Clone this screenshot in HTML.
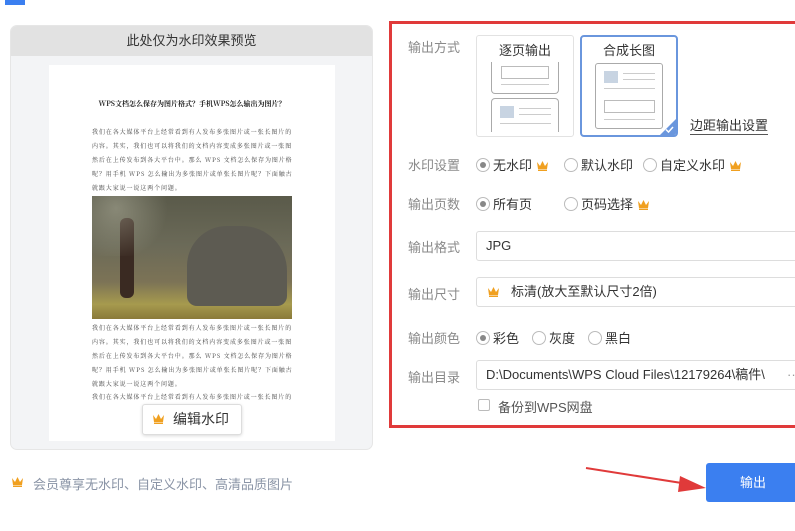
<!DOCTYPE html>
<html><head><meta charset="utf-8"><style>
*{margin:0;padding:0;box-sizing:border-box}
body{width:795px;height:531px;overflow:hidden;background:#fff;font-family:"Liberation Sans","Noto Sans CJK SC",sans-serif;position:relative;color:#333}
.a{position:absolute}
.lbl{position:absolute;left:408px;font-size:13px;color:#8a8a8a}
.txt{position:absolute;font-size:13px;color:#333;white-space:nowrap}
.radio{display:inline-block;width:14px;height:14px;border:1px solid #bbb;border-radius:50%;vertical-align:-2px;margin-right:3px;position:relative;background:#fff}
.radio.on::after{content:"";position:absolute;left:3px;top:3px;width:6px;height:6px;border-radius:50%;background:#888}
.crown{display:inline-block;vertical-align:-1px}
.inp{position:absolute;left:476px;width:330px;height:30px;border:1px solid #ddd;border-radius:3px;font-size:13px;line-height:28px;padding-left:9px;color:#333;white-space:nowrap}
.pl{position:absolute;left:92px;width:200px;font-size:6px;color:#444;white-space:nowrap;overflow:hidden;font-family:"Noto Serif CJK SC",serif;letter-spacing:0.9px}
</style></head><body>
<div class="a" style="left:5px;top:0;width:20px;height:5px;background:#3b7ff0"></div>

<div class="a" style="left:10px;top:25px;width:363px;height:425px;border:1px solid #e6e6e6;border-radius:7px;background:#f3f4f6;overflow:hidden">
  <div style="height:30px;background:#e2e2e2;text-align:center;font-size:13px;line-height:30px;color:#333">此处仅为水印效果预览</div>
</div>
<div class="a" style="left:49px;top:65px;width:286px;height:376px;background:#fff"></div>
<div class="a" style="left:49px;top:99px;width:286px;text-align:center;font-size:7px;font-weight:bold;color:#222;font-family:'Noto Serif CJK SC',serif">WPS文档怎么保存为图片格式？手机WPS怎么输出为图片？</div>
<div class="pl" style="top:127px">我们在各大媒体平台上经常看到有人发布多张图片或一张长图片的</div>
<div class="pl" style="top:141px">内容。其实，我们也可以将我们的文档内容变成多张图片或一张图片，</div>
<div class="pl" style="top:155px">然后在上传发布到各大平台中。那么 WPS 文档怎么保存为图片格式</div>
<div class="pl" style="top:169px">呢？用手机 WPS 怎么输出为多张图片或单张长图片呢？下面触古今</div>
<div class="pl" style="top:183px">就跟大家说一说这两个问题。</div>
<div class="a" style="left:92px;top:196px;width:200px;height:123px;background:linear-gradient(180deg,#5a5a4a 0%,#6b6a58 40%,#7c7356 70%,#a69a4e 88%,#8a7a3a 100%);overflow:hidden">
  <div class="a" style="left:95px;top:30px;width:100px;height:80px;background:#5d5b52;border-radius:40px 45px 10px 10px"></div>
  <div class="a" style="left:28px;top:22px;width:14px;height:80px;background:#3a2a22;border-radius:6px"></div>
  <div class="a" style="left:0;top:0;width:80px;height:60px;background:radial-gradient(circle at 30% 20%,rgba(200,200,180,.4),transparent 70%)"></div>
</div>
<div class="pl" style="top:323px">我们在各大媒体平台上经常看到有人发布多张图片或一张长图片的</div>
<div class="pl" style="top:337px">内容。其实，我们也可以将我们的文档内容变成多张图片或一张图片，</div>
<div class="pl" style="top:351px">然后在上传发布到各大平台中。那么 WPS 文档怎么保存为图片格式</div>
<div class="pl" style="top:365px">呢？用手机 WPS 怎么输出为多张图片或单张长图片呢？下面触古今</div>
<div class="pl" style="top:379px">就跟大家说一说这两个问题。</div>
<div class="pl" style="top:392px">我们在各大媒体平台上经常看到有人发布多张图片或一张长图片的</div>
<div class="a" style="left:142px;top:404px;width:100px;height:31px;background:#fff;border:1px solid #ddd;border-radius:3px;box-shadow:0 1px 3px rgba(0,0,0,.15);font-size:14px;line-height:29px;padding-left:30px;color:#333">编辑水印</div>
<svg class="a" style="left:152px;top:413px" width="13" height="11" viewBox="0 0 13 11"><path d="M1 2 L4 6 L6.5 1 L9 6 L12 2 L11 9 L2 9Z" fill="#f0a020"/><rect x="2" y="9.5" width="9" height="1.5" fill="#f0a020"/></svg>
<svg class="a" style="left:11px;top:476px" width="13" height="11" viewBox="0 0 13 11"><path d="M1 2 L4 6 L6.5 1 L9 6 L12 2 L11 9 L2 9Z" fill="#f0a020"/><rect x="2" y="9.5" width="9" height="1.5" fill="#f0a020"/></svg>
<div class="txt" style="left:33px;top:474px;color:#8a94a6">会员尊享无水印、自定义水印、高清品质图片</div>

<div class="a" style="left:389px;top:21px;width:420px;height:407px;border:3px solid #e03a3a"></div>
<div class="lbl" style="top:37px">输出方式</div>
<div class="a" style="left:476px;top:35px;width:98px;height:102px;border:1px solid #e2e2e2;border-radius:3px;background:#fff">
  <div style="text-align:center;font-size:13px;margin-top:4px;color:#333">逐页输出</div>
  <div class="a" style="left:14px;top:26px;width:68px;height:32px;border:1px solid #aaa;border-top:none;border-radius:0 0 4px 4px"><div class="a" style="left:9px;top:4px;width:48px;height:13px;border:1px solid #bbb"></div><div class="a" style="left:9px;top:22px;width:48px;height:1px;background:#ccc"></div></div>
  <div class="a" style="left:14px;top:62px;width:68px;height:34px;border:1px solid #aaa;border-bottom:none;border-radius:4px 4px 0 0"><div class="a" style="left:8px;top:7px;width:14px;height:12px;background:#c8d4e2"></div><div class="a" style="left:27px;top:9px;width:32px;height:1px;background:#ccc"></div><div class="a" style="left:27px;top:15px;width:32px;height:1px;background:#ccc"></div><div class="a" style="left:8px;top:24px;width:51px;height:1px;background:#ccc"></div></div>
</div>
<div class="a" style="left:580px;top:35px;width:98px;height:102px;border:2px solid #6a96dd;border-radius:4px;background:#fff;overflow:hidden">
  <div style="text-align:center;font-size:13px;margin-top:3px;color:#333">合成长图</div>
  <div class="a" style="left:13px;top:26px;width:68px;height:66px;border:1px solid #aaa;border-radius:3px">
    <div class="a" style="left:8px;top:7px;width:14px;height:12px;background:#c8d4e2"></div><div class="a" style="left:27px;top:9px;width:32px;height:1px;background:#ccc"></div><div class="a" style="left:27px;top:15px;width:32px;height:1px;background:#ccc"></div><div class="a" style="left:8px;top:24px;width:51px;height:1px;background:#ccc"></div>
    <div class="a" style="left:8px;top:36px;width:51px;height:13px;border:1px solid #bbb"></div><div class="a" style="left:8px;top:55px;width:51px;height:1px;background:#ccc"></div>
  </div>
  <div class="a" style="right:-1px;bottom:-1px;width:0;height:0;border-left:18px solid transparent;border-bottom:18px solid #6a96dd"></div>
  <svg class="a" style="right:2px;bottom:2px" width="9" height="7" viewBox="0 0 9 7"><path d="M1 3.5 L3.5 6 L8 1" stroke="#fff" stroke-width="1.5" fill="none"/></svg>
</div>
<div class="txt" style="left:690px;top:118px;border-bottom:1px solid #555;line-height:16px">边距输出设置</div>

<div class="lbl" style="top:155px">水印设置</div>
<div class="txt" style="left:476px;top:155px"><span class="radio on"></span>无水印 <svg class="crown" width="13" height="11" viewBox="0 0 13 11"><path d="M1 2 L4 6 L6.5 1 L9 6 L12 2 L11 9 L2 9Z" fill="#f0a020"/><rect x="2" y="9.5" width="9" height="1.5" fill="#f0a020"/></svg></div>
<div class="txt" style="left:564px;top:155px"><span class="radio"></span>默认水印</div>
<div class="txt" style="left:643px;top:155px"><span class="radio"></span>自定义水印 <svg class="crown" width="13" height="11" viewBox="0 0 13 11"><path d="M1 2 L4 6 L6.5 1 L9 6 L12 2 L11 9 L2 9Z" fill="#f0a020"/><rect x="2" y="9.5" width="9" height="1.5" fill="#f0a020"/></svg></div>

<div class="lbl" style="top:194px">输出页数</div>
<div class="txt" style="left:476px;top:194px"><span class="radio on"></span>所有页</div>
<div class="txt" style="left:564px;top:194px"><span class="radio"></span>页码选择 <svg class="crown" width="13" height="11" viewBox="0 0 13 11"><path d="M1 2 L4 6 L6.5 1 L9 6 L12 2 L11 9 L2 9Z" fill="#f0a020"/><rect x="2" y="9.5" width="9" height="1.5" fill="#f0a020"/></svg></div>

<div class="lbl" style="top:237px">输出格式</div>
<div class="inp" style="top:231px">JPG</div>
<div class="lbl" style="top:284px">输出尺寸</div>
<div class="inp" style="top:277px;padding-left:34px">标清(放大至默认尺寸2倍)</div>
<svg class="a" style="left:487px;top:286px" width="13" height="11" viewBox="0 0 13 11"><path d="M1 2 L4 6 L6.5 1 L9 6 L12 2 L11 9 L2 9Z" fill="#f0a020"/><rect x="2" y="9.5" width="9" height="1.5" fill="#f0a020"/></svg>

<div class="lbl" style="top:328px">输出颜色</div>
<div class="txt" style="left:476px;top:328px"><span class="radio on"></span>彩色</div>
<div class="txt" style="left:532px;top:328px"><span class="radio"></span>灰度</div>
<div class="txt" style="left:588px;top:328px"><span class="radio"></span>黑白</div>

<div class="lbl" style="top:367px">输出目录</div>
<div class="inp" style="top:360px">D:\Documents\WPS Cloud Files\12179264\稿件\<span style="position:absolute;left:310px;color:#999">··</span></div>
<div class="a" style="left:478px;top:399px;width:12px;height:12px;border:1px solid #bbb;border-radius:2px"></div>
<div class="txt" style="left:498px;top:397px;color:#555">备份到WPS网盘</div>

<svg class="a" style="left:580px;top:462px" width="130" height="36" viewBox="0 0 130 36"><path d="M6 6 L108 22" stroke="#e03a3a" stroke-width="2"/><path d="M100 14 L126 26 L98 30Z" fill="#e03a3a"/></svg>
<div class="a" style="left:706px;top:463px;width:95px;height:39px;background:#3b7ff0;border-radius:3px;color:#fff;font-size:13px;line-height:39px;padding-left:34px">输出</div>
</body></html>
